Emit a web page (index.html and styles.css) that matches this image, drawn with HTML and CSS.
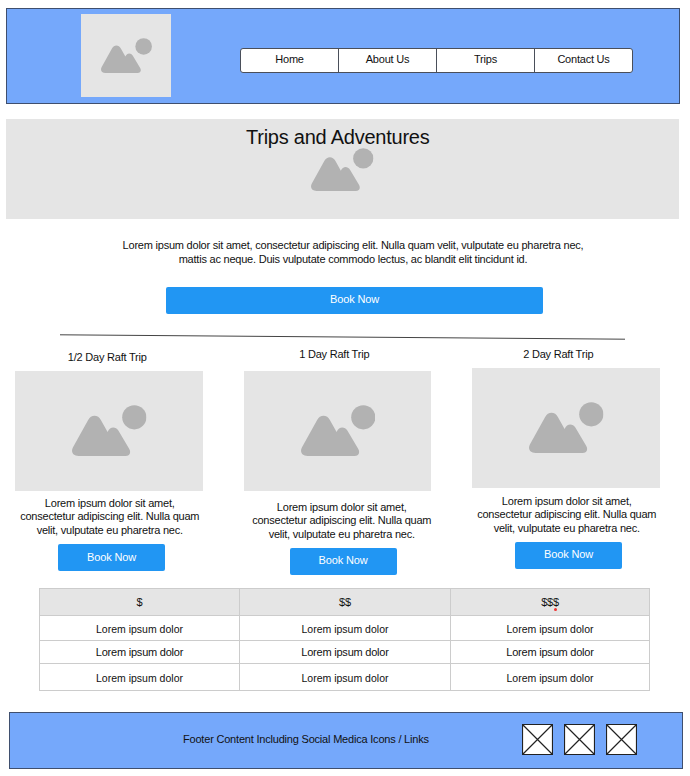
FILE: index.html
```
<!DOCTYPE html>
<html lang="en">
<head>
<meta charset="utf-8">
<title>Trips and Adventures</title>
<link rel="stylesheet" href="styles.css">
</head>
<body>
<svg class="defs" aria-hidden="true">
  <symbol id="picture" viewBox="0 0 74.5 51">
    <path d="M6.500 51C1 51-1.500 47 1 42.300L16 15.200C19 9.400 26 9.400 29 15.200L35.600 26.900C38 21.500 43.500 21.300 46.500 25.800L57 43.500C59.600 47.500 57.500 51 53.500 51Z"/>
    <circle cx="62.300" cy="12.300" r="12.100"/>
  </symbol>
  <symbol id="cross" viewBox="0 0 31 31">
    <path class="cross-lines" d="M.5.5H30.500V30.500H.5ZM.5.5L30.500 30.500M30.500.5L.5 30.500"/>
  </symbol>
</svg>

<header class="header">
  <div class="logo"><svg><use href="#picture"/></svg></div>
  <nav class="nav">
    <a>Home</a><a>About Us</a><a>Trips</a><a>Contact Us</a>
  </nav>
</header>

<section class="hero">
  <h1>Trips and Adventures</h1>
  <svg><use href="#picture"/></svg>
</section>

<section class="intro">
  <p>Lorem ipsum dolor sit amet, consectetur adipiscing elit. Nulla quam velit, vulputate eu pharetra nec,<br>mattis ac neque. Duis vulputate commodo lectus, ac blandit elit tincidunt id.</p>
  <a class="button button-wide">Book Now</a>
</section>

<svg class="divider" viewBox="0 0 566 6"><path d="M0 .8L565 5.200"/></svg>

<main class="cards">
  <article class="card card-half">
    <h2>1/2 Day Raft Trip</h2>
    <div class="photo"><svg><use href="#picture"/></svg></div>
    <p>Lorem ipsum dolor sit amet,<br>consectetur adipiscing elit. Nulla quam<br>velit, vulputate eu pharetra nec.</p>
    <a class="button">Book Now</a>
  </article>
  <article class="card card-one">
    <h2>1 Day Raft Trip</h2>
    <div class="photo"><svg><use href="#picture"/></svg></div>
    <p>Lorem ipsum dolor sit amet,<br>consectetur adipiscing elit. Nulla quam<br>velit, vulputate eu pharetra nec.</p>
    <a class="button">Book Now</a>
  </article>
  <article class="card card-two">
    <h2>2 Day Raft Trip</h2>
    <div class="photo"><svg><use href="#picture"/></svg></div>
    <p>Lorem ipsum dolor sit amet,<br>consectetur adipiscing elit. Nulla quam<br>velit, vulputate eu pharetra nec.</p>
    <a class="button">Book Now</a>
  </article>
</main>

<section class="prices">
  <div class="head">$</div><div class="head">$$</div><div class="head">$$<span class="marked">$</span></div>
  <div class="flat">Lorem ipsum dolor</div><div class="flat">Lorem ipsum dolor</div><div class="flat">Lorem ipsum dolor</div>
  <div>Lorem ipsum dolor</div><div>Lorem ipsum dolor</div><div>Lorem ipsum dolor</div>
  <div class="flat">Lorem ipsum dolor</div><div class="flat">Lorem ipsum dolor</div><div class="flat">Lorem ipsum dolor</div>
</section>

<footer class="footer">
  <p>Footer Content Including Social Medica Icons / Links</p>
  <div class="social">
    <svg><use href="#cross"/></svg><svg><use href="#cross"/></svg><svg><use href="#cross"/></svg>
  </div>
</footer>
</body>
</html>
```
FILE: styles.css
```
* { box-sizing: border-box; }
body {
  margin: 0;
  padding: 8px 0 0 6px;
  width: 690px;
  height: 776px;
  overflow: hidden;
  background: #fff;
  color: #111;
  font: 11px/13.5px "Liberation Sans", Arial, sans-serif;
  letter-spacing: -0.22px;
}
h1, h2, p { margin: 0; font-weight: normal; }
h2 { font-size: 11px; }
svg { display: block; fill: #b2b2b2; }
.defs { width: 0; height: 0; position: absolute; }

.header {
  display: flex;
  width: 673.5px;
  height: 96px;
  border: 1px solid #3f4f6e;
  background: #75a8fb;
}
.logo {
  width: 90px;
  height: 83px;
  margin: 5px 0 0 74px;
  padding: 24px 0 0 20px;
  background: #e5e5e5;
}
.logo svg { width: 51px; height: 35px; }
.nav {
  display: flex;
  width: 393px;
  height: 25px;
  margin: 39px 0 0 69px;
  border: 1px solid #4a4f5a;
  border-radius: 3px;
  background: #fff;
}
.nav a { flex: 1; text-align: center; line-height: 21px; }
.nav a + a { border-left: 1px solid #4a4f5a; }

.hero {
  width: 673px;
  height: 100px;
  margin-top: 15px;
  padding-top: 7px;
  background: #e5e5e5;
}
.hero h1 {
  width: 184px;
  margin-left: 240px;
  font-size: 20px;
  line-height: 22px;
  letter-spacing: -0.24px;
  white-space: nowrap;
}
.hero svg { width: 62.5px; height: 43px; margin: 0 0 0 305px; }

.intro { width: 694px; padding-top: 20px; text-align: center; }
.button {
  display: block;
  width: 107px;
  height: 27px;
  border-radius: 2px;
  background: #2196f3;
  color: #fff;
  text-align: center;
  line-height: 26px;
  letter-spacing: -0.15px;
}
.button-wide { width: 377px; margin: 21px 0 0 160px; line-height: 25px; }
.divider { width: 566px; height: 6px; margin: 20px 0 0 54px; fill: none; stroke: #444; stroke-width: 1; }

.cards { display: flex; gap: 41px; height: 248px; padding-left: 9px; }
.card { width: 187.5px; text-align: center; }
.photo { height: 120px; padding: 34px 0 0 57px; background: #e5e5e5; }
.photo svg { width: 74.5px; height: 51px; }
.card-half h2 { margin: 11px 3px 6px 0; }
.card-half p { margin: 6px -2px 0 0; }
.card-half .button { margin: 7px 0 0 43px; }
.card-one h2 { margin: 8px 6px 9px 0; }
.card-one p { margin: 10px -9px 0 0; }
.card-one .button { margin: 7px 0 0 46px; line-height: 25px; }
.card-two h2 { margin: 8px 15px 6px 0; }
.card-two p { margin: 7px -2px 0 0; }
.card-two .button { margin: 7px 0 0 43px; line-height: 25px; }

.prices {
  display: grid;
  grid-template-columns: 200px 211px 199px;
  grid-template-rows: 27px 25px 23px 27px;
  width: 611px;
  margin-left: 33px;
  border-top: 1px solid #ccc;
  border-left: 1px solid #ccc;
}
.prices div {
  padding-top: 1px;
  display: grid;
  place-content: center;
  border-right: 1px solid #ccc;
  border-bottom: 1px solid #ccc;
}
.prices .head { display: block; padding: 0; text-align: center; line-height: 27px; background: #e5e5e5; }
.prices .flat { padding-top: 3px; font-size: 10.5px; letter-spacing: 0; }
.marked { position: relative; }
.marked::after {
  content: "";
  position: absolute;
  left: 1px;
  bottom: -3px;
  width: 3px;
  height: 3px;
  border-radius: 50%;
  background: #e33;
}

.footer {
  display: flex;
  align-items: center;
  width: 673.5px;
  height: 57px;
  margin: 21px 0 0 3px;
  padding-left: 173px;
  border: 1px solid #3f4f6e;
  background: #75a8fb;
}
.footer p { width: 339px; letter-spacing: -0.2px; padding-bottom: 2px; }
.social { display: flex; gap: 11px; margin-top: -2px; }
.social svg { width: 31px; height: 31px; }
.cross-lines { fill: #fff; stroke: #222; stroke-width: 1.2; }
```
